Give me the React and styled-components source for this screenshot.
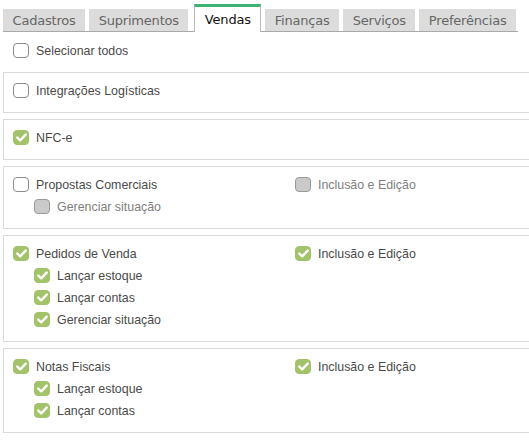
import React from 'react'
import styled, { createGlobalStyle } from 'styled-components'

const GlobalStyle = createGlobalStyle`
  html, body {
    margin: 0;
    padding: 0;
    background: #fff;
    overflow: hidden;
  }
  body {
    font-family: "Liberation Sans", Arial, sans-serif;
  }
`

const tabs = ['Cadastros', 'Suprimentos', 'Vendas', 'Finanças', 'Serviços', 'Preferências']

const groups = [
  { main: { label: 'Integrações Logísticas' } },
  { main: { label: 'NFC-e', checked: true } },
  {
    main: { label: 'Propostas Comerciais' },
    subs: [{ label: 'Gerenciar situação', disabled: true }],
    side: { label: 'Inclusão e Edição', disabled: true },
  },
  {
    main: { label: 'Pedidos de Venda', checked: true },
    subs: [
      { label: 'Lançar estoque', checked: true },
      { label: 'Lançar contas', checked: true },
      { label: 'Gerenciar situação', checked: true },
    ],
    side: { label: 'Inclusão e Edição', checked: true },
  },
  {
    main: { label: 'Notas Fiscais', checked: true },
    subs: [
      { label: 'Lançar estoque', checked: true },
      { label: 'Lançar contas', checked: true },
    ],
    side: { label: 'Inclusão e Edição', checked: true },
  },
]

const Check = ({ checked, disabled }) => (
  <Box $checked={checked} $disabled={disabled}>
    {checked && (
      <svg width="11" height="9" viewBox="0 0 11 9">
        <path d="M1.3 4.6 L4.2 7.3 L9.7 1.6" fill="none" stroke="#fff" strokeWidth="2.4" strokeLinecap="round" strokeLinejoin="round" />
      </svg>
    )}
  </Box>
)

const Option = ({ label, checked, disabled, sub }) => (
  <Row $sub={sub}>
    <Check checked={checked} disabled={disabled} />
    <Label $disabled={disabled}>{label}</Label>
  </Row>
)

const App = () => {
  return (
    <Page>
      <GlobalStyle />
      <TabBar>
        {tabs.map((t) => (
          <Tab key={t} $active={t === 'Vendas'}>{t}</Tab>
        ))}
      </TabBar>
      <SelectAll>
        <Option label="Selecionar todos" />
      </SelectAll>
      <Groups>
        {groups.map((g) => (
          <Group key={g.main.label}>
            <Column>
              <Option {...g.main} />
              {g.subs && g.subs.map((s) => <Option key={s.label} {...s} sub />)}
            </Column>
            <Column>
              {g.side && <Option {...g.side} />}
            </Column>
          </Group>
        ))}
      </Groups>
    </Page>
  )
}

const Page = styled.div`
  width: 540px;
  padding-left: 3px;
`

const TabBar = styled.div`
  display: flex;
  align-items: flex-end;
  gap: 4px;
  width: 515px;
  height: 32px;
  border-bottom: 1px solid #a9a9a9;
  box-sizing: border-box;
`

const Tab = styled.div`
  font-family: "DejaVu Sans", Verdana, sans-serif;
  font-size: 13px;
  letter-spacing: -0.2px;
  padding: 0 9.5px;
  box-sizing: border-box;
  display: flex;
  align-items: center;
  height: ${(p) => (p.$active ? '28px' : '22px')};
  margin-bottom: ${(p) => (p.$active ? '-1px' : '0')};
  background: ${(p) => (p.$active ? '#fff' : '#dcdcdc')};
  color: ${(p) => (p.$active ? '#111' : '#666')};
  border-top: ${(p) => (p.$active ? '3px solid #3cb371' : 'none')};
  border-left: ${(p) => (p.$active ? '1px solid #bbb' : 'none')};
  border-right: ${(p) => (p.$active ? '1px solid #bbb' : 'none')};
  margin-left: ${(p) => (p.$active ? '2px' : '0')};
  padding-top: ${(p) => (p.$active ? '0' : '1px')};
`

const SelectAll = styled.div`
  padding: 7px 0 11px 10px;
`

const Groups = styled.div`
  display: flex;
  flex-direction: column;
  gap: 6px;
`

const Group = styled.div`
  display: grid;
  grid-template-columns: 282px 1fr;
  border: 1px solid #dadada;
  padding: 6px 9px 11px;
`

const Column = styled.div`
  display: flex;
  flex-direction: column;
`

const Row = styled.div`
  display: flex;
  align-items: center;
  gap: 7px;
  height: 22px;
  padding-left: ${(p) => (p.$sub ? '21px' : '0')};
`

const Box = styled.span`
  width: 16px;
  height: 15px;
  box-sizing: border-box;
  border-radius: 4px;
  display: inline-flex;
  align-items: center;
  justify-content: center;
  flex-shrink: 0;
  border: 1px solid ${(p) => (p.$checked ? '#a3c36b' : p.$disabled ? '#9a9a9a' : '#8c8c8c')};
  background: ${(p) => (p.$checked ? '#a3c36b' : p.$disabled ? '#cacaca' : '#fff')};
`

const Label = styled.span`
  font-size: 12.4px;
  padding-top: 1px;
  color: ${(p) => (p.$disabled ? '#808080' : '#4a4a4a')};
`

export default App
